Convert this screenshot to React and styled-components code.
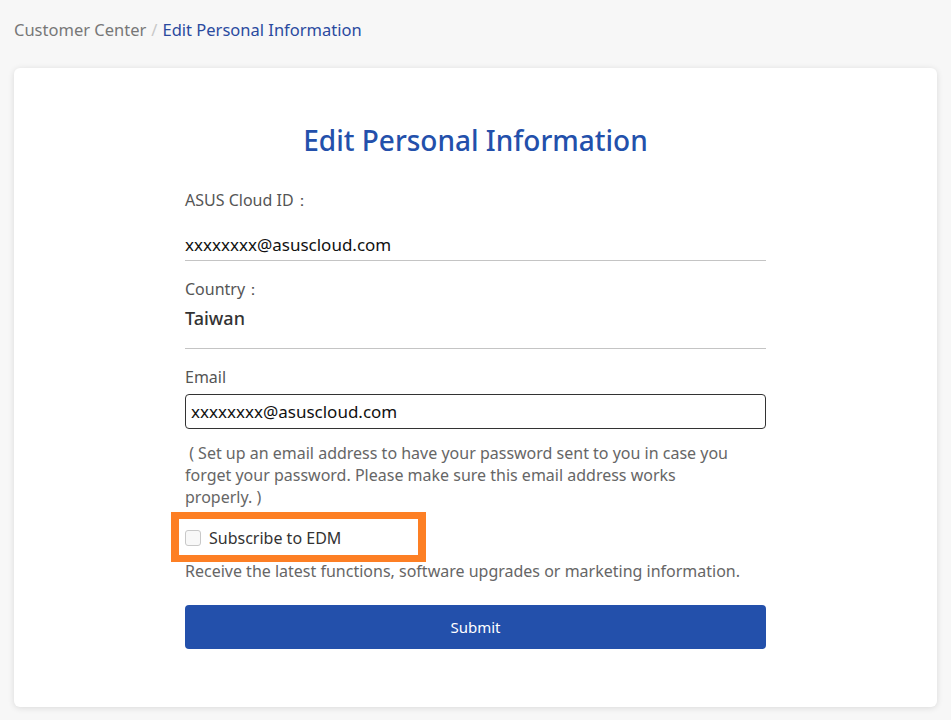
import styled, { createGlobalStyle } from "styled-components";

const GlobalStyle = createGlobalStyle`
  body {
    margin: 0;
    background: #f7f7f7;
    font-family: "Noto Sans", "Open Sans", sans-serif;
  }
`;

const Page = styled.div`
  padding: 0 14px 13px;
`;

const Breadcrumb = styled.nav`
  height: 68px;
  display: flex;
  align-items: center;
  padding-bottom: 10px;
  box-sizing: border-box;
  font-size: 16.5px;
  color: #777;
`;

const Sep = styled.span`
  color: #c8c8c8;
  margin: 0 5px;
`;

const Current = styled.span`
  color: #2a4a9f;
`;

const Card = styled.main`
  background: #fff;
  border-radius: 6px;
  box-shadow: 0 1px 6px rgba(0, 0, 0, 0.12);
  padding: 52px 0 58px;
`;

const Form = styled.form`
  width: 581px;
  margin: 0 auto;
  display: flex;
  flex-direction: column;
`;

const Title = styled.h1`
  margin: 0 0 28px;
  text-align: center;
  font-size: 28px;
  line-height: 40px;
  font-weight: 500;
  color: #2350ab;
`;

const Label = styled.label`
  font-size: 16px;
  line-height: 24px;
  color: #555;
  margin-top: ${(p) => p.$top || 0}px;
`;

const Value = styled.div`
  font-size: ${(p) => (p.$strong ? 18 : 17)}px;
  line-height: 24px;
  color: ${(p) => (p.$strong ? "#333" : "#111")};
  font-weight: ${(p) => (p.$strong ? 500 : 400)};
  margin-top: ${(p) => p.$top}px;
  padding-bottom: ${(p) => p.$bottom}px;
  border-bottom: 1px solid #c4c4c4;
`;

const Input = styled.input`
  margin-top: 5px;
  height: 35px;
  flex: 0 0 35px;
  box-sizing: border-box;
  border: 1px solid #333;
  border-radius: 4px;
  padding: 0 5px;
  font-family: inherit;
  font-size: 17px;
  color: #111;
`;

const Help = styled.p`
  margin: ${(p) => p.$top}px 0 0;
  max-width: ${(p) => p.$width || 581}px;
  font-size: 16px;
  line-height: 22px;
  color: #666;
`;

const CheckRow = styled.div`
  position: relative;
  display: flex;
  align-items: center;
  gap: 8px;
  height: 24px;
  margin-top: 18px;
  font-size: 16px;
  color: #333;
`;

const Box = styled.input`
  appearance: none;
  margin: 0;
  width: 16px;
  height: 16px;
  border: 1px solid #c8c8c8;
  border-radius: 3px;
  background: #f8f8f8;
`;

const Highlight = styled.div`
  position: absolute;
  left: -14px;
  top: -14px;
  width: 255px;
  height: 50px;
  box-sizing: border-box;
  border: 7px solid #fd7f24;
  border-left-width: 8px;
  border-right-width: 8px;
  pointer-events: none;
`;

const Submit = styled.button`
  margin-top: 23px;
  height: 44px;
  flex: 0 0 44px;
  border: none;
  border-radius: 4px;
  background: #2350ab;
  color: #fff;
  font-family: inherit;
  font-size: 15px;
`;

export default function App() {
  return (
    <>
      <GlobalStyle />
      <Page>
        <Breadcrumb>
          Customer Center<Sep>/</Sep>
          <Current>Edit Personal Information</Current>
        </Breadcrumb>
        <Card>
          <Form onSubmit={(e) => e.preventDefault()}>
            <Title>Edit Personal Information</Title>
            <Label>ASUS Cloud ID：</Label>
            <Value $top={21} $bottom={3}>
              xxxxxxxx@asuscloud.com
            </Value>
            <Label $top={16}>Country：</Label>
            <Value $strong $top={5} $bottom={18}>
              Taiwan
            </Value>
            <Label $top={16} htmlFor="email">
              Email
            </Label>
            <Input id="email" defaultValue="xxxxxxxx@asuscloud.com" />
            <Help $top={13} $width={565}>
              &nbsp;( Set up an email address to have your password sent to you in case you
              forget your password. Please make sure this email address works properly.&nbsp;)
            </Help>
            <CheckRow>
              <Box type="checkbox" id="edm" />
              <label htmlFor="edm">Subscribe to EDM</label>
              <Highlight />
            </CheckRow>
            <Help $top={10}>
              Receive the latest functions, software upgrades or marketing information.
            </Help>
            <Submit type="submit">Submit</Submit>
          </Form>
        </Card>
      </Page>
    </>
  );
}
